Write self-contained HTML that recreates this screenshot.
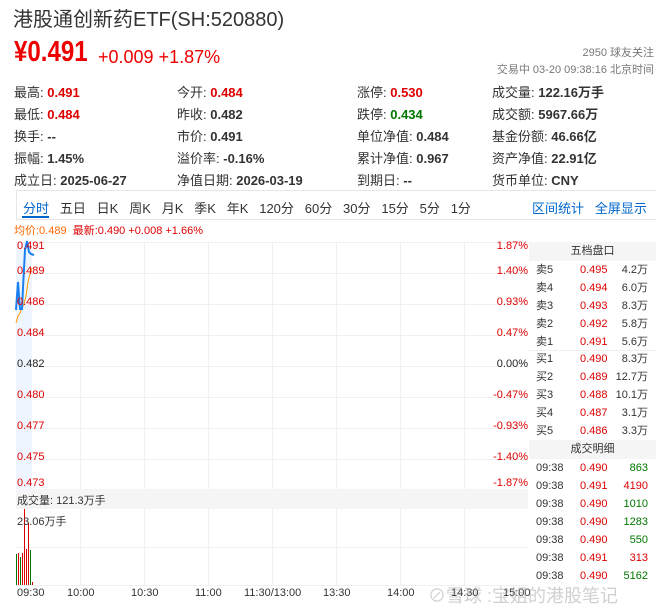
<!DOCTYPE html>
<html><head><meta charset="utf-8"><style>
*{margin:0;padding:0;box-sizing:border-box}
body{width:656px;height:613px;background:#fff;position:relative;overflow:hidden;font-family:"Liberation Sans","Noto Sans CJK SC",sans-serif;color:#333}
.a{position:absolute;white-space:nowrap}
.r{color:#d00}.g{color:#070}
.info{font-size:13px;color:#333}
.info b{font-weight:bold;color:#333}
.info b.r{color:#d00}.info b.g{color:#070}
.s{font-size:11px;color:#d00}
</style></head><body>
<div class="a" style="left:13px;top:3px;font-size:20px;color:#333">港股通创新药ETF(SH:520880)</div>
<div class="a" style="left:14px;top:36px;font-size:29px;font-weight:bold;color:#e00;transform:scaleX(0.83);transform-origin:0 0">¥0.491</div>
<div class="a" style="left:98px;top:47px;font-size:18px;color:#e00">+0.009 +1.87%</div>
<div class="a" style="right:2px;top:44px;font-size:11px;color:#777">2950 球友关注</div>
<div class="a" style="right:2px;top:61px;font-size:11px;color:#777">交易中 03-20 09:38:16 北京时间</div>

<div class="a info" style="left:14px;top:82px">最高: <b class="r">0.491</b></div>
<div class="a info" style="left:14px;top:104px">最低: <b class="r">0.484</b></div>
<div class="a info" style="left:14px;top:126px">换手: <b>--</b></div>
<div class="a info" style="left:14px;top:148px">振幅: <b>1.45%</b></div>
<div class="a info" style="left:14px;top:170px">成立日: <b>2025-06-27</b></div>
<div class="a info" style="left:177px;top:82px">今开: <b class="r">0.484</b></div>
<div class="a info" style="left:177px;top:104px">昨收: <b>0.482</b></div>
<div class="a info" style="left:177px;top:126px">市价: <b>0.491</b></div>
<div class="a info" style="left:177px;top:148px">溢价率: <b>-0.16%</b></div>
<div class="a info" style="left:177px;top:170px">净值日期: <b>2026-03-19</b></div>
<div class="a info" style="left:357px;top:82px">涨停: <b class="r">0.530</b></div>
<div class="a info" style="left:357px;top:104px">跌停: <b class="g">0.434</b></div>
<div class="a info" style="left:357px;top:126px">单位净值: <b>0.484</b></div>
<div class="a info" style="left:357px;top:148px">累计净值: <b>0.967</b></div>
<div class="a info" style="left:357px;top:170px">到期日: <b>--</b></div>
<div class="a info" style="left:492px;top:82px">成交量: <b>122.16万手</b></div>
<div class="a info" style="left:492px;top:104px">成交额: <b>5967.66万</b></div>
<div class="a info" style="left:492px;top:126px">基金份额: <b>46.66亿</b></div>
<div class="a info" style="left:492px;top:148px">资产净值: <b>22.91亿</b></div>
<div class="a info" style="left:492px;top:170px">货币单位: <b>CNY</b></div>

<div class="a" style="left:16px;top:190px;width:640px;height:30px;border:1px solid #e6e6e6;border-right:none"></div>
<div class="a" style="left:23px;top:198px;font-size:13px;color:#333;word-spacing:0">
<span style="color:#06c">分时</span>&nbsp;&nbsp; 五日&nbsp;&nbsp; 日K&nbsp;&nbsp; 周K&nbsp;&nbsp; 月K&nbsp;&nbsp; 季K&nbsp;&nbsp; 年K&nbsp;&nbsp; 120分&nbsp;&nbsp; 60分&nbsp;&nbsp; 30分&nbsp;&nbsp; 15分&nbsp;&nbsp; 5分&nbsp;&nbsp; 1分</div>
<div class="a" style="left:22px;top:216px;width:27px;height:2px;background:#06c"></div>
<div class="a" style="left:532px;top:198px;font-size:13px;color:#06c">区间统计&nbsp;&nbsp; 全屏显示</div>
<div class="a" style="left:14px;top:222px;font-size:11px"><span style="color:#f60">均价:0.489</span>&nbsp; <span class="r">最新:0.490 +0.008 +1.66%</span></div>

<svg class="a" style="left:0;top:0" width="656" height="613">
<rect x="16" y="242" width="16" height="247" fill="#eef5ff"/>
<g stroke="#f0f0f0" stroke-width="1">
<line x1="16" y1="242.5" x2="528" y2="242.5"/><line x1="16" y1="273.5" x2="528" y2="273.5"/><line x1="16" y1="304.5" x2="528" y2="304.5"/><line x1="16" y1="335.5" x2="528" y2="335.5"/><line x1="16" y1="366.5" x2="528" y2="366.5"/><line x1="16" y1="397.5" x2="528" y2="397.5"/><line x1="16" y1="428.5" x2="528" y2="428.5"/><line x1="16" y1="459.5" x2="528" y2="459.5"/>
<line x1="16" y1="547.5" x2="528" y2="547.5"/><line x1="16" y1="585.5" x2="528" y2="585.5"/>
<line x1="80.5" y1="242" x2="80.5" y2="586"/><line x1="144.5" y1="242" x2="144.5" y2="586"/><line x1="208.5" y1="242" x2="208.5" y2="586"/><line x1="272.5" y1="242" x2="272.5" y2="586"/><line x1="336.5" y1="242" x2="336.5" y2="586"/><line x1="400.5" y1="242" x2="400.5" y2="586"/><line x1="464.5" y1="242" x2="464.5" y2="586"/>
</g>
<rect x="16" y="489" width="512" height="20" fill="#f5f5f5"/>
<polyline points="16,323 18,316 20,313 22,308 24,304 26,296 28,282 30,274 32,268" fill="none" stroke="#f90" stroke-width="1"/>
<polyline points="16,310 18,282 20,309 22,309 23,288 25,250 27,241 29,252 31,254 34,255" fill="none" stroke="#1a7ff0" stroke-width="2"/>
<g stroke-width="1">
<line x1="16.5" y1="585" x2="16.5" y2="554" stroke="#070"/><line x1="18.5" y1="585" x2="18.5" y2="553" stroke="#d00"/><line x1="20.5" y1="585" x2="20.5" y2="557" stroke="#070"/><line x1="22.5" y1="585" x2="22.5" y2="553" stroke="#d00"/><line x1="24.5" y1="585" x2="24.5" y2="509" stroke="#d00"/><line x1="26.5" y1="585" x2="26.5" y2="549" stroke="#d00"/><line x1="28.5" y1="585" x2="28.5" y2="523" stroke="#d00"/><line x1="30.5" y1="585" x2="30.5" y2="550" stroke="#070"/><line x1="32.5" y1="585" x2="32.5" y2="582" stroke="#d00"/>
</g>
</svg>

<div class="a s" style="left:17px;top:240px">0.491</div>
<div class="a s" style="left:17px;top:265px">0.489</div>
<div class="a s" style="left:17px;top:296px">0.486</div>
<div class="a s" style="left:17px;top:327px">0.484</div>
<div class="a s" style="left:17px;top:358px;color:#222">0.482</div>
<div class="a s g" style="left:17px;top:389px">0.480</div>
<div class="a s g" style="left:17px;top:420px">0.477</div>
<div class="a s g" style="left:17px;top:451px">0.475</div>
<div class="a s g" style="left:17px;top:477px">0.473</div>
<div class="a s" style="right:128px;top:240px">1.87%</div>
<div class="a s" style="right:128px;top:265px">1.40%</div>
<div class="a s" style="right:128px;top:296px">0.93%</div>
<div class="a s" style="right:128px;top:327px">0.47%</div>
<div class="a s" style="right:128px;top:358px;color:#222">0.00%</div>
<div class="a s g" style="right:128px;top:389px">-0.47%</div>
<div class="a s g" style="right:128px;top:420px">-0.93%</div>
<div class="a s g" style="right:128px;top:451px">-1.40%</div>
<div class="a s g" style="right:128px;top:477px">-1.87%</div>
<div class="a" style="left:17px;top:492px;font-size:11px;color:#333">成交量: 121.3万手</div>
<div class="a" style="left:17px;top:513px;font-size:11px;color:#333">23.06万手</div>

<div class="a" style="left:17px;top:587px;font-size:11px;color:#333">09:30</div>
<div class="a" style="left:67px;top:587px;font-size:11px;color:#333">10:00</div>
<div class="a" style="left:131px;top:587px;font-size:11px;color:#333">10:30</div>
<div class="a" style="left:195px;top:587px;font-size:11px;color:#333">11:00</div>
<div class="a" style="left:244px;top:587px;font-size:11px;color:#333">11:30/13:00</div>
<div class="a" style="left:323px;top:587px;font-size:11px;color:#333">13:30</div>
<div class="a" style="left:387px;top:587px;font-size:11px;color:#333">14:00</div>
<div class="a" style="left:451px;top:587px;font-size:11px;color:#333">14:30</div>
<div class="a" style="left:503px;top:587px;font-size:11px;color:#333">15:00</div>

<div class="a" style="left:529px;top:242px;width:127px;height:19px;background:#f5f5f5;font-size:11px;text-align:center;line-height:19px;color:#333">五档盘口</div>
<div class="a" style="left:529px;top:350px;width:127px;height:1px;background:#eee"></div>
<div class="a" style="left:529px;top:440px;width:127px;height:19px;background:#f5f5f5;font-size:11px;text-align:center;line-height:19px;color:#333">成交明细</div>
<div class="a" style="left:536px;top:261px;font-size:11px;line-height:18px;color:#333">卖5<br>卖4<br>卖3<br>卖2<br>卖1</div>
<div class="a r" style="left:580px;top:261px;font-size:11px;line-height:18px">0.495<br>0.494<br>0.493<br>0.492<br>0.491</div>
<div class="a" style="right:8px;top:261px;font-size:11px;line-height:18px;text-align:right;color:#333">4.2万<br>6.0万<br>8.3万<br>5.8万<br>5.6万</div>
<div class="a" style="left:536px;top:350px;font-size:11px;line-height:18px;color:#333">买1<br>买2<br>买3<br>买4<br>买5</div>
<div class="a r" style="left:580px;top:350px;font-size:11px;line-height:18px">0.490<br>0.489<br>0.488<br>0.487<br>0.486</div>
<div class="a" style="right:8px;top:350px;font-size:11px;line-height:18px;text-align:right;color:#333">8.3万<br>12.7万<br>10.1万<br>3.1万<br>3.3万</div>
<div class="a" style="left:536px;top:459px;font-size:11px;line-height:18px;color:#333">09:38<br>09:38<br>09:38<br>09:38<br>09:38<br>09:38<br>09:38</div>
<div class="a r" style="left:580px;top:459px;font-size:11px;line-height:18px">0.490<br>0.491<br>0.490<br>0.490<br>0.490<br>0.491<br>0.490</div>
<div class="a" style="right:8px;top:459px;font-size:11px;line-height:18px;text-align:right"><span class="g">863</span><br><span class="r">4190</span><br><span class="g">1010</span><br><span class="g">1283</span><br><span class="g">550</span><br><span class="r">313</span><br><span class="g">5162</span></div>

<div class="a" style="left:428px;top:582px;font-size:18px;color:rgba(150,150,150,0.45)">⊘雪球 :宝姐的港股笔记</div>
</body></html>
